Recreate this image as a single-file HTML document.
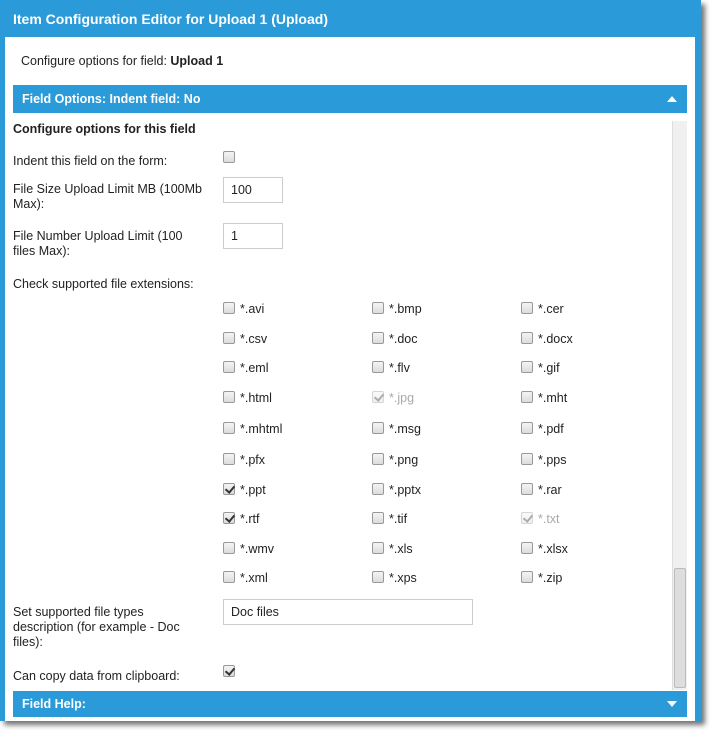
<!DOCTYPE html>
<html><head><style>
*{margin:0;padding:0;box-sizing:border-box}
body{width:715px;height:731px;background:#fff;font-family:"Liberation Sans",Arial,sans-serif;font-size:12px;color:#222;position:relative;overflow:hidden}
.a{position:absolute;white-space:nowrap}
.frame{position:absolute;left:0;top:0;width:701px;height:721px;background:#2a9ad8;box-shadow:4px 4px 5px rgba(0,0,0,.55)}
.inner{position:absolute;left:5px;top:37px;width:690px;height:684px;background:#fff}
.title{left:13px;top:11px;color:#fff;font-weight:bold;font-size:14px}
.bar{position:absolute;left:13px;width:674px;background:#2a9ad8;color:#fff;font-weight:bold;font-size:12.5px;padding-left:9px}
.tri{position:absolute;right:10px;width:0;height:0;border-left:5px solid transparent;border-right:5px solid transparent}
.cb{position:absolute;width:12px;height:12px;border:1px solid #999;border-radius:2px;background:linear-gradient(#f4f4f4,#dcdcdc)}
.cb.c::after{content:"";position:absolute;left:3px;top:0px;width:4px;height:7px;border:solid #333;border-width:0 2px 2px 0;transform:rotate(40deg)}
.cb.d{opacity:.4}
.lbl{position:absolute;font-size:12.5px}
.inp{position:absolute;border:1px solid #ccc;background:#fff;padding:5px 7px;font-size:12.5px}
</style></head><body>
<div class="frame"></div>
<div class="inner"></div>
<div class="a title">Item Configuration Editor for Upload 1 (Upload)</div>
<div class="a" style="left:21px;top:54px;font-size:12.5px">Configure options for field: <b>Upload 1</b></div>
<div class="bar" style="top:85px;height:28px;line-height:28px">Field Options: Indent field: No<span class="tri" style="top:11px;border-bottom:6px solid #fff"></span></div>
<div class="a" style="left:13px;top:122px;font-weight:bold;font-size:12.5px">Configure options for this field</div>
<div class="lbl" style="left:13px;top:154px">Indent this field on the form:</div>
<div class="cb" style="left:223px;top:151px"></div>
<div class="lbl" style="left:13px;top:182px;line-height:15px">File Size Upload Limit MB (100Mb<br>Max):</div>
<div class="inp" style="left:223px;top:177px;width:60px;height:26px">100</div>
<div class="lbl" style="left:13px;top:229px;line-height:15px">File Number Upload Limit (100<br>files Max):</div>
<div class="inp" style="left:223px;top:223px;width:60px;height:26px">1</div>
<div class="lbl" style="left:13px;top:277px">Check supported file extensions:</div>
<div id="g"></div>
<div class="lbl" style="left:13px;top:605px;line-height:15px">Set supported file types<br>description (for example - Doc<br>files):</div>
<div class="inp" style="left:223px;top:599px;width:250px;height:26px">Doc files</div>
<div class="lbl" style="left:13px;top:669px">Can copy data from clipboard:</div>
<div class="cb c" style="left:223px;top:665px"></div>
<div class="a" style="left:672px;top:121px;width:15px;height:569px;background:#f0f0f0;border-left:1px solid #ddd"></div>
<div class="a" style="left:674px;top:568px;width:12px;height:120px;background:#ddd;border:1px solid #bbb;border-radius:2px"></div>
<div class="bar" style="top:691px;height:26px;line-height:26px">Field Help:<span class="tri" style="top:10px;border-top:6px solid #fff"></span></div>
<script>
var e=[["avi","bmp","cer"],["csv","doc","docx"],["eml","flv","gif"],["html","jpg*","mht"],["mhtml","msg","pdf"],["pfx","png","pps"],["ppt+","pptx","rar"],["rtf+","tif","txt*"],["wmv","xls","xlsx"],["xml","xps","zip"]];
var ys=[309,339,368,398,429,460,490,519,549,578],xs=[223,372,521],h="";
e.forEach(function(r,i){r.forEach(function(n,j){var c="",col="#222";if(n.slice(-1)=="*"){c=" c d";col="#aaa";n=n.slice(0,-1)}else if(n.slice(-1)=="+"){c=" c";n=n.slice(0,-1)}
h+='<div class="cb'+c+'" style="left:'+xs[j]+'px;top:'+(ys[i]-7)+'px"></div><div class="lbl" style="left:'+(xs[j]+17)+'px;top:'+(ys[i]-7)+'px;color:'+col+'">*.'+n+'</div>'})});
document.getElementById("g").innerHTML=h;
</script>
</body></html>
